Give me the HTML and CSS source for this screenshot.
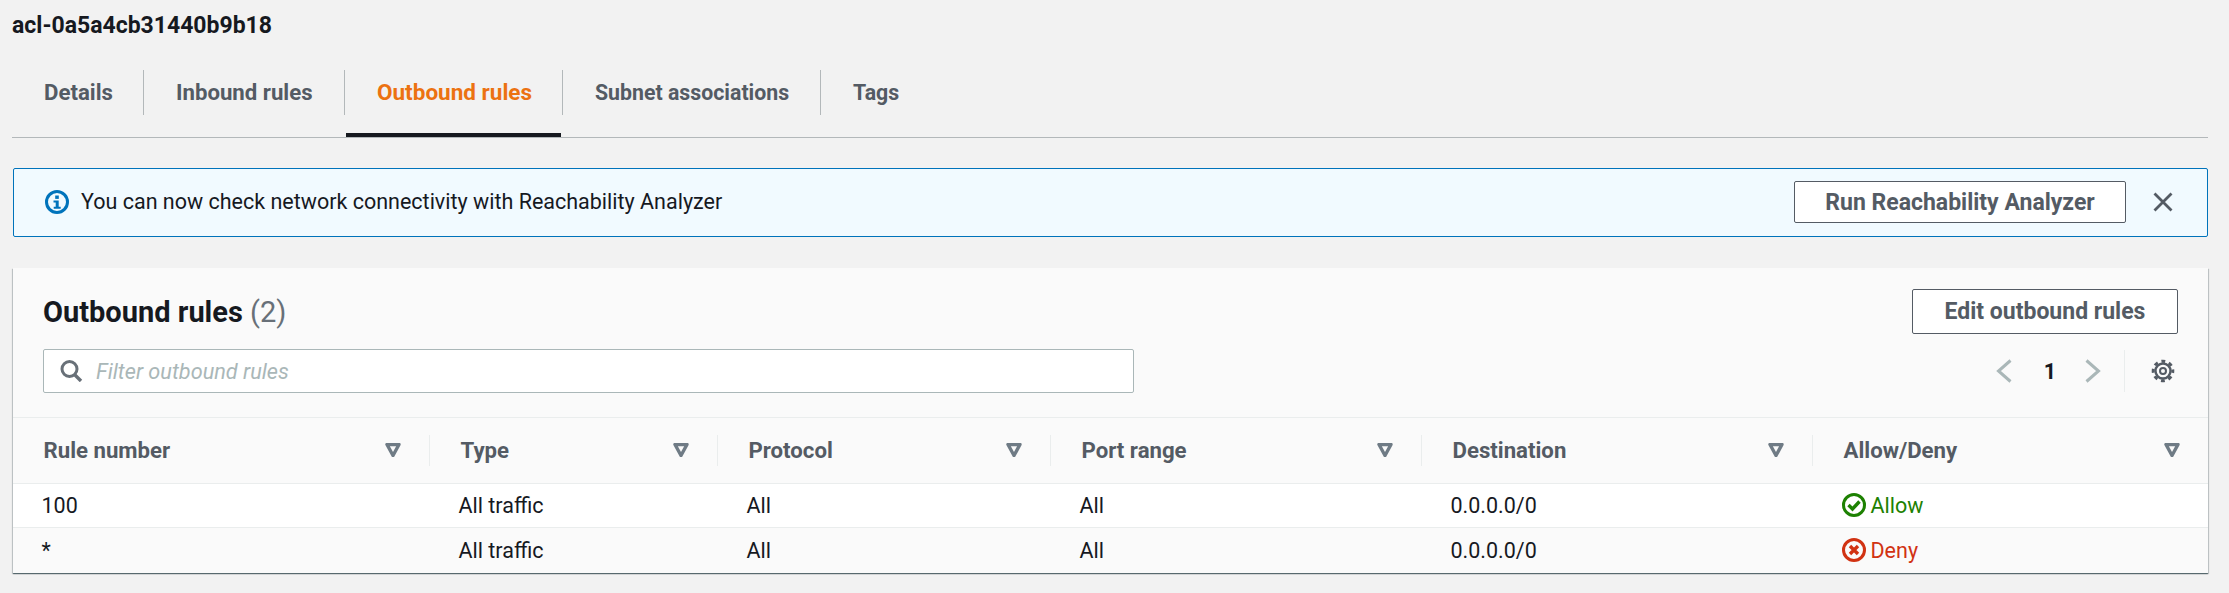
FILE: index.html
```html
<!DOCTYPE html>
<html lang="en">
<head>
<meta charset="utf-8">
<title>acl-0a5a4cb31440b9b18</title>
<link rel="stylesheet" href="styles.css">
</head>
<body>
<h1 class="page-title">acl-0a5a4cb31440b9b18</h1>
<nav class="tabs">
  <a class="tab">Details</a>
  <a class="tab">Inbound rules</a>
  <a class="tab tab-active">Outbound rules</a>
  <a class="tab tab-tight">Subnet associations</a>
  <a class="tab tab-tight tab-last">Tags</a>
</nav>
<section class="alert">
  <svg class="alert-icon" viewBox="0 0 24 24"><circle cx="12" cy="12" r="10.5" fill="none" stroke="#0073bb" stroke-width="3"/><rect x="10.2" y="5.5" width="3.6" height="3.4" fill="#0073bb"/><path d="M8.5 10.5h5.2v6.3h2v2h-7v-2h2v-4.300h-2.200z" fill="#0073bb"/></svg>
  <span class="alert-text">You can now check network connectivity with Reachability Analyzer</span>
  <button class="btn btn-run">Run Reachability Analyzer</button>
  <svg class="close-icon" viewBox="0 0 20 20"><path d="M1.500 1.500l17 17M18.500 1.500l-17 17" fill="none" stroke="#545b64" stroke-width="2.800"/></svg>
</section>
<section class="card">
  <header class="card-head">
    <div class="head-row">
      <h2 class="card-title">Outbound rules <span class="count">(2)</span></h2>
      <button class="btn btn-edit">Edit outbound rules</button>
    </div>
    <div class="filter-row">
      <div class="filter">
        <svg class="search-icon" viewBox="0 0 23 22"><circle cx="9.500" cy="9" r="7.500" fill="none" stroke="#687078" stroke-width="3"/><path d="M14.500 14.500l6.500 6.500" stroke="#687078" stroke-width="3.400"/></svg>
        <span class="placeholder">Filter outbound rules</span>
      </div>
      <div class="pager">
        <svg class="chev" viewBox="0 0 16 24"><path d="M14.500 1.500L2.500 12l12 10.500" fill="none" stroke="#aab7b8" stroke-width="3"/></svg>
        <span class="page-num">1</span>
        <svg class="chev chev-next" viewBox="0 0 16 24"><path d="M1.500 1.500L13.500 12l-12 10.500" fill="none" stroke="#aab7b8" stroke-width="3"/></svg>
        <span class="pager-divider"></span>
        <svg class="gear" viewBox="0 0 24 24"><circle cx="12" cy="12" r="7.500" fill="none" stroke="#545b64" stroke-width="2.400"/><circle cx="12" cy="12" r="9.800" fill="none" stroke="#545b64" stroke-width="3" stroke-dasharray="3.850 3.850" stroke-dashoffset="1.925"/><circle cx="12" cy="12" r="3" fill="none" stroke="#545b64" stroke-width="2"/></svg>
      </div>
    </div>
  </header>
  <table class="rules">
    <thead>
      <tr>
        <th><div class="th-in">Rule number<svg class="sort" viewBox="0 0 16 14"><path d="M2 1.500h12L8 12.500z" fill="none" stroke="#6f7b85" stroke-width="3.400" stroke-linejoin="round"/></svg></div></th>
        <th><div class="th-in">Type<svg class="sort" viewBox="0 0 16 14"><path d="M2 1.500h12L8 12.500z" fill="none" stroke="#6f7b85" stroke-width="3.400" stroke-linejoin="round"/></svg></div></th>
        <th><div class="th-in">Protocol<svg class="sort" viewBox="0 0 16 14"><path d="M2 1.500h12L8 12.500z" fill="none" stroke="#6f7b85" stroke-width="3.400" stroke-linejoin="round"/></svg></div></th>
        <th><div class="th-in">Port range<svg class="sort" viewBox="0 0 16 14"><path d="M2 1.500h12L8 12.500z" fill="none" stroke="#6f7b85" stroke-width="3.400" stroke-linejoin="round"/></svg></div></th>
        <th><div class="th-in">Destination<svg class="sort" viewBox="0 0 16 14"><path d="M2 1.500h12L8 12.500z" fill="none" stroke="#6f7b85" stroke-width="3.400" stroke-linejoin="round"/></svg></div></th>
        <th><div class="th-in th-last">Allow/Deny<svg class="sort" viewBox="0 0 16 14"><path d="M2 1.500h12L8 12.500z" fill="none" stroke="#6f7b85" stroke-width="3.400" stroke-linejoin="round"/></svg></div></th>
      </tr>
    </thead>
    <tbody>
      <tr class="row-a">
        <td>100</td><td>All traffic</td><td>All</td><td>All</td><td>0.0.0.0/0</td>
        <td><span class="status allow"><svg class="status-icon" viewBox="0 0 24 24"><circle cx="12" cy="12" r="10.500" fill="none" stroke="currentColor" stroke-width="3"/><path d="M6.500 12l4 4L17.500 8.500" fill="none" stroke="currentColor" stroke-width="3.400"/></svg>Allow</span></td>
      </tr>
      <tr class="row-b">
        <td>*</td><td>All traffic</td><td>All</td><td>All</td><td>0.0.0.0/0</td>
        <td><span class="status deny"><svg class="status-icon" viewBox="0 0 24 24"><circle cx="12" cy="12" r="10.500" fill="none" stroke="currentColor" stroke-width="3"/><path d="M8 8l8 8M16 8l-8 8" fill="none" stroke="currentColor" stroke-width="3.400"/></svg>Deny</span></td>
      </tr>
    </tbody>
  </table>
</section>
</body>
</html>
```
FILE: styles.css
```css
* { box-sizing: border-box; }
html, body { height: 100%; }
body {
  margin: 0;
  padding: 13px 21px 0 12px;
  background: #f2f2f2;
  color: #16191f;
  font-family: Roboto, "Open Sans", sans-serif;
  font-size: 21.500px;
  overflow: hidden;
}
.page-title {
  margin: 0;
  height: 26px;
  line-height: 26px;
  font-size: 23px;
  font-weight: 700;
}
.tabs {
  display: grid;
  grid-template-columns: 132px 201px 218px 258px auto;
  margin-top: 31px;
  padding-bottom: 22px;
  border-bottom: 1px solid #b3b8ba;
  height: 68px;
}
.tab {
  position: relative;
  padding-left: 32px;
  height: 45px;
  line-height: 45px;
  font-size: 22.200px;
  font-weight: 700;
  color: #545b64;
  border-right: 1px solid #b3b8ba;
}
.tab-tight { font-size: 21.300px; }
.tab-active { color: #ec7211; font-size: 22.500px; }
.tab-active::after {
  content: "";
  position: absolute;
  left: 1px;
  right: 1px;
  top: 63px;
  height: 4px;
  background: #16191f;
}
.tab-last { border-right: 0; }
.alert {
  display: flex;
  align-items: center;
  height: 69px;
  margin: 30px 0 31px 1px;
  padding: 0 34px 1px 31px;
  background: #f1faff;
  border: 1px solid #0073bb;
  border-radius: 2px;
}
.alert-icon { width: 24px; height: 24px; flex: none; }
.alert-text { margin-left: 12px; flex: 1; line-height: 24px; }
.btn {
  display: block;
  background: #fff;
  border: 1px solid #545b64;
  border-radius: 2px;
  color: #545b64;
  font-family: inherit;
  font-size: 23px;
  font-weight: 700;
  padding: 0;
}
.btn-run { width: 332px; height: 42px; }
.close-icon { width: 20px; height: 20px; margin-left: 27px; flex: none; }
.card {
  margin-left: 1px;
  background: #fafafa;
  box-shadow: 0 1px 1px 0 rgba(0, 28, 36, .5), 1px 1px 1px 0 rgba(0, 28, 36, .15), -1px 1px 1px 0 rgba(0, 28, 36, .15);
}
.card-head {
  padding: 21px 30px 24px 30px;
  border-bottom: 1px solid #eaeded;
}
.head-row {
  display: flex;
  justify-content: space-between;
  align-items: center;
}
.card-title {
  margin: 0;
  font-size: 29px;
  font-weight: 700;
  line-height: 32px;
}
.count { font-weight: 400; color: #687078; }
.btn-edit { width: 266px; height: 45px; }
.filter-row {
  display: flex;
  align-items: center;
  margin-top: 15px;
}
.filter {
  display: flex;
  align-items: center;
  width: 1091px;
  height: 44px;
  padding-left: 16px;
  background: #fff;
  border: 1px solid #aab7b8;
  border-radius: 2px;
}
.search-icon { width: 23px; height: 22px; flex: none; }
.placeholder {
  margin-left: 13px;
  font-style: italic;
  color: #aab7b8;
  font-size: 21.700px;
}
.pager {
  display: flex;
  align-items: center;
  margin-left: auto;
  margin-right: 3px;
}
.chev { width: 16px; height: 24px; flex: none; }
.page-num {
  width: 20px;
  margin-left: 28px;
  text-align: center;
  font-weight: 700;
}
.chev-next { margin-left: 25px; }
.pager-divider {
  width: 1px;
  height: 42px;
  margin-left: 23px;
  background: #eaeded;
}
.gear { width: 24px; height: 24px; margin-left: 26px; flex: none; }
.rules {
  width: 100%;
  table-layout: fixed;
  border-collapse: collapse;
}
.rules th:nth-child(1), .rules td:nth-child(1) { width: 417px; }
.rules th:nth-child(2), .rules td:nth-child(2) { width: 288px; }
.rules th:nth-child(3), .rules td:nth-child(3) { width: 333px; }
.rules th:nth-child(4), .rules td:nth-child(4) { width: 371px; }
.rules th:nth-child(5), .rules td:nth-child(5) { width: 391px; }
.rules th {
  height: 65px;
  padding: 0;
  text-align: left;
  font-weight: 700;
  color: #545b64;
  border-bottom: 1px solid #eaeded;
  font-size: 22.200px;
}
.th-in {
  display: flex;
  justify-content: space-between;
  align-items: center;
  height: 31px;
  padding: 0 28px 0 30.500px;
  border-right: 1px solid #eaeded;
}
.th-last { border-right: 0; }
.sort { width: 16px; height: 14px; flex: none; }
.rules td {
  height: 44px;
  padding: 0 0 0 28.500px;
  border-bottom: 1px solid #eaeded;
}
.row-a { background: #fff; }
.row-b td { height: 46px; border-bottom: 0; }
.status { display: flex; align-items: center; }
.status-icon { width: 24px; height: 24px; margin-right: 5px; flex: none; }
.allow { color: #1d8102; }
.deny { color: #d13212; }
```
